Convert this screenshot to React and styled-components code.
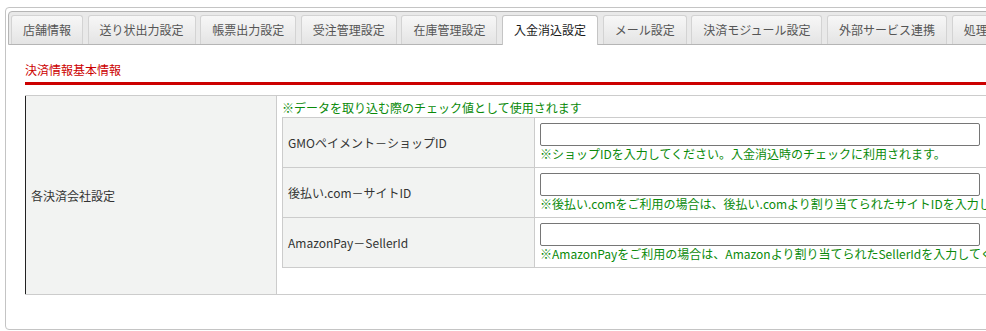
import styled, { createGlobalStyle } from "styled-components";

const GlobalStyle = createGlobalStyle`
  body {
    margin: 0;
    overflow: hidden;
    background: #fff;
    font-family: "Noto Sans CJK JP", "Noto Sans", sans-serif;
    font-size: 12px;
    color: #333;
  }
`;

const Panel = styled.div`
  box-sizing: border-box;
  margin: 7px 0 0 5px;
  width: 1100px;
  height: 323px;
  padding: 3px 2px;
  border: 1px solid #c4c4c4;
  border-radius: 4px;
  background: #fff;
`;

const TabBar = styled.ul`
  box-sizing: border-box;
  display: flex;
  align-items: flex-end;
  gap: 4.6px;
  height: 34px;
  margin: 0;
  padding: 3px 0 0 2px;
  list-style: none;
  border: 1px solid #b5b5b5;
  border-radius: 4px 4px 0 0;
  background: #e9e9e9;
`;

const Tab = styled.li`
  box-sizing: border-box;
  flex: none;
  height: ${({ $active }) => ($active ? "30px" : "29px")};
  margin-bottom: ${({ $active }) => ($active ? "-1px" : "0")};
  padding: 0 11px;
  line-height: 28px;
  white-space: nowrap;
  border: 1px solid ${({ $active }) => ($active ? "#c5c5c5" : "#d3d3d3")};
  border-bottom: none;
  border-radius: 3px 3px 0 0;
  background: ${({ $active }) =>
    $active ? "#fff" : "linear-gradient(#f7f7f7, #e4e4e4)"};
  color: ${({ $active }) => ($active ? "#1a1a1a" : "#555")};
`;

const Content = styled.div`
  padding-left: 17px;
`;

const Heading = styled.h2`
  margin: 16px 0 0;
  padding-bottom: 3px;
  line-height: 18px;
  font-size: 12px;
  font-weight: normal;
  color: #cc0000;
  border-bottom: 3px solid #cc0000;
`;

const Table = styled.table`
  margin-top: 10px;
  width: 1060px;
  border-collapse: collapse;
  border-top: 1px solid #ccc;
  border-bottom: 1px solid #ccc;
  border-left: 1px solid #222;
`;

const Th = styled.td`
  box-sizing: border-box;
  width: 251px;
  padding: 0 5px;
  vertical-align: middle;
  background: #f2f3f2;
  border-right: 1px solid #ccc;
  color: #333;
`;

const Td = styled.td`
  padding: 3px 5px 26px;
  vertical-align: top;
`;

const Note = styled.div`
  line-height: ${({ $tall }) => ($tall ? "18px" : "16px")};
  color: #0a8a0a;
  white-space: nowrap;
`;

const SubTable = styled.table`
  width: 100%;
  border-collapse: collapse;
  border: 1px solid #ccc;
`;

const SubRow = styled.tr`
  height: 50px;
  border-bottom: 1px solid #ccc;
`;

const SubTh = styled(Th)`
  width: 252px;
  padding-left: 5px;
`;

const SubTd = styled.td`
  padding: 5px 5px 4px;
  vertical-align: top;
`;

const Input = styled.input`
  display: block;
  box-sizing: border-box;
  width: 440px;
  height: 23px;
  margin: 0;
  border: 1px solid #767676;
  border-radius: 2px;
  background: #fff;
`;

const tabs = [
  "店舗情報",
  "送り状出力設定",
  "帳票出力設定",
  "受注管理設定",
  "在庫管理設定",
  "入金消込設定",
  "メール設定",
  "決済モジュール設定",
  "外部サービス連携",
  "処理設定",
];

const rows = [
  {
    label: "GMOペイメント－ショップID",
    note: "※ショップIDを入力してください。入金消込時のチェックに利用されます。",
  },
  {
    label: "後払い.com－サイトID",
    note: "※後払い.comをご利用の場合は、後払い.comより割り当てられたサイトIDを入力してください。",
  },
  {
    label: "AmazonPay－SellerId",
    note: "※AmazonPayをご利用の場合は、Amazonより割り当てられたSellerIdを入力してください。",
  },
];

export default function App() {
  return (
    <>
      <GlobalStyle />
      <Panel>
        <TabBar>
          {tabs.map((t) => (
            <Tab key={t} $active={t === "入金消込設定"}>
              {t}
            </Tab>
          ))}
        </TabBar>
        <Content>
          <Heading>決済情報基本情報</Heading>
          <Table>
            <tbody>
              <tr>
                <Th>各決済会社設定</Th>
                <Td>
                  <Note $tall>※データを取り込む際のチェック値として使用されます</Note>
                  <SubTable>
                    <tbody>
                      {rows.map((r) => (
                        <SubRow key={r.label}>
                          <SubTh>{r.label}</SubTh>
                          <SubTd>
                            <Input type="text" />
                            <Note>{r.note}</Note>
                          </SubTd>
                        </SubRow>
                      ))}
                    </tbody>
                  </SubTable>
                </Td>
              </tr>
            </tbody>
          </Table>
        </Content>
      </Panel>
    </>
  );
}
